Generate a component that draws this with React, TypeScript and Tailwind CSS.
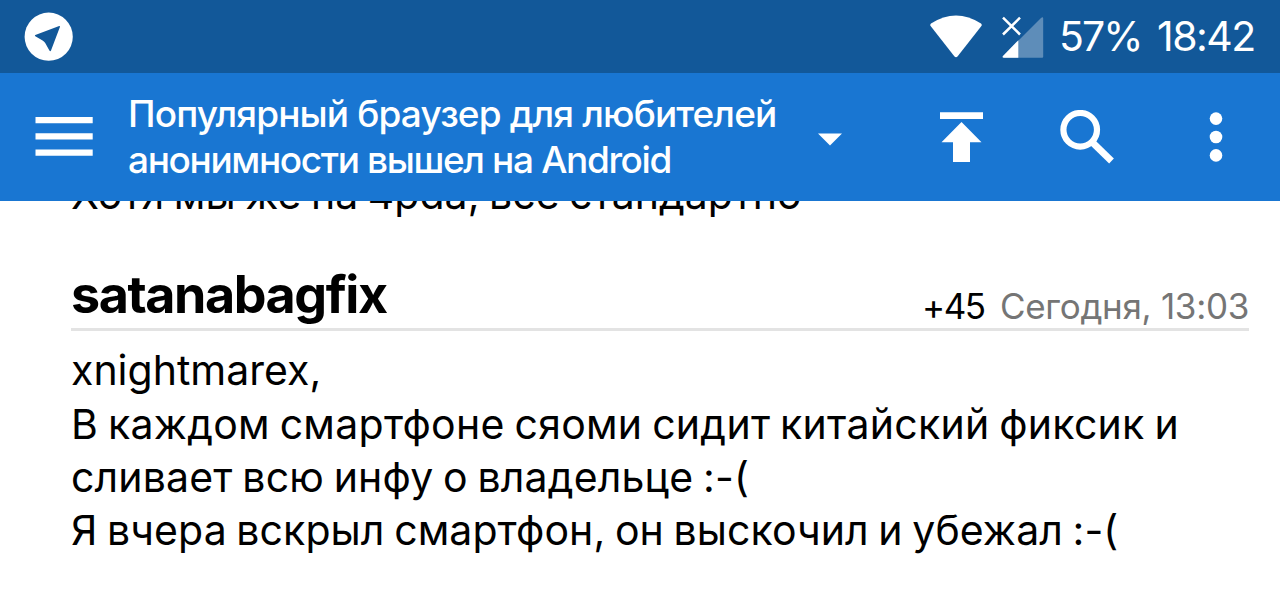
import type { ReactNode } from "react"
import { clsx } from "clsx"

interface TextLine {
  text: string
  className: string
}

const titleLines: TextLine[] = [
  { text: "Популярный браузер для любителей", className: "tracking-[-0.87px]" },
  { text: "анонимности вышел на Android", className: "tracking-[-1.37px]" },
]

const commentLines: TextLine[] = [
  { text: "xnightmarex,", className: "tracking-normal" },
  { text: "В каждом смартфоне сяоми сидит китайский фиксик и", className: "tracking-[0.27px]" },
  { text: "сливает всю инфу о владельце :-(", className: "tracking-[0.17px]" },
  { text: "Я вчера вскрыл смартфон, он выскочил и убежал :-(", className: "tracking-[0.08px]" },
]

function TelegramIcon() {
  return (
    <svg className="h-12 w-12 overflow-visible" viewBox="0 0 48 48">
      <circle cx="23.7" cy="23.7" r="24.1" fill="#fff" />
      <path d="M34.2 13 10.3 22Q9.4 22.6 10.3 23.2L17.6 27.4Q19.4 28.4 20.2 30L24.4 37.6Q25.3 38.8 26 37.6L35 13.8Q35 12.8 34.2 13Z" fill="#125899" />
    </svg>
  )
}

function WifiIcon() {
  return (
    <svg className="h-[43px] w-[52px]" viewBox="0 0 52 43">
      <path d="M1 8.5Q26-7.5 51 8.5Q52.3 9.6 51.4 11L27.5 41.4Q26 43 24.5 41.4L.6 11Q-.3 9.6 1 8.5Z" fill="#fff" />
    </svg>
  )
}

function SignalIcon() {
  return (
    <svg className="h-[42px] w-[42px]" viewBox="0 0 42 42">
      <path d="M1 40 39 2Q41.2.4 41.2 2.8V40.8Q41.2 41.8 40.2 41.8H2Q-.2 41.8 1 40Z" fill="#fff" fillOpacity=".32" />
      <path d="M1 40 16.3 24.3V41.8H2Q-.2 41.8 1 40Z" fill="#fff" />
      <path d="M1 1.7 18 18.5M18 1.7 1 18.5" stroke="#fff" strokeWidth="2.5" />
    </svg>
  )
}

function StatusBar() {
  return (
    <div className="flex h-[73px] items-center bg-[#125899] pl-[25px] pr-[27px] text-[41px] leading-none">
      <TelegramIcon />
      <div className="ml-auto flex items-center">
        <WifiIcon />
        <div className="ml-5">
          <SignalIcon />
        </div>
        <span className="ml-[15px] w-[98px] whitespace-nowrap tracking-[-2px]">57%</span>
        <span className="w-[96px] whitespace-nowrap tracking-[-1.5px]">18:42</span>
      </div>
    </div>
  )
}

function IconButton({ label, className, children }: { label: string; className: string; children: ReactNode }) {
  return (
    <button aria-label={label} className={clsx("shrink-0", className)}>
      {children}
    </button>
  )
}

function Toolbar() {
  return (
    <header className="flex h-32 items-center bg-[#1976d2] pl-[35px] pr-[57px]">
      <IconButton label="Меню" className="w-[58px]">
        <svg className="h-10 w-[58px]" viewBox="0 0 58 40" fill="#fff">
          <path d="M.5 0H57.7V6.2H.5ZM.5 16.2H57.7V22.4H.5ZM.5 32.4H57.7V38.8H.5Z" />
        </svg>
      </IconButton>
      <h1 className="ml-[35px] w-[690px] text-[37px] font-medium leading-[46px]">
        {titleLines.map((line) => (
          <span key={line.text} className={clsx("block whitespace-nowrap", line.className)}>
            {line.text}
          </span>
        ))}
      </h1>
      <IconButton label="Разделы" className="w-6">
        <svg className="mt-[5px] h-[13px] w-6" viewBox="0 0 24 13" fill="#fff">
          <path d="M0 .5H24L12 12.5Z" />
        </svg>
      </IconButton>
      <IconButton label="Наверх" className="ml-[98px] w-[43px]">
        <svg className="h-[50px] w-[43px]" viewBox="0 0 43 50" fill="#fff">
          <path d="M0 .3H43V7H0ZM21.5 10 41.5 30.3H30V50H13V30.3H1.5Z" />
        </svg>
      </IconButton>
      <IconButton label="Поиск" className="ml-[77px] w-[54px]">
        <svg className="h-[54px] w-[54px]" viewBox="0 0 54 54" fill="none" stroke="#fff">
          <circle cx="20.2" cy="19.8" r="16.8" strokeWidth="6.2" />
          <path d="M32 32 51.5 51" strokeWidth="6.8" />
        </svg>
      </IconButton>
      <IconButton label="Ещё" className="ml-auto w-[14px]">
        <svg className="h-[50px] w-[14px]" viewBox="0 0 14 50" fill="#fff">
          <circle cx="7" cy="6.6" r="6.3" />
          <circle cx="7" cy="25" r="6.3" />
          <circle cx="7" cy="43.4" r="6.3" />
        </svg>
      </IconButton>
    </header>
  )
}

export default function App() {
  return (
    <div className="flex h-[595px] w-[1280px] flex-col overflow-hidden bg-white font-['Inter','Noto_Sans',sans-serif] text-black">
      <div className="text-white">
        <StatusBar />
        <Toolbar />
      </div>
      <main className="flex-1 overflow-hidden pl-[71px] pr-[31px] text-[41px] leading-[53.3px]">
        {/* Tail of the previous comment, scrolled under the toolbar */}
        <p className="-mt-[33px] whitespace-nowrap tracking-[0.02px] [word-spacing:-2px]">
          Хотя мы же на 4pda, все стандартно
        </p>

        <article className="mt-[44px]">
          <div className="flex items-end border-b-[3px] border-[#e3e3e3] pb-[3px]">
            <h2 className="text-[52px] font-bold leading-[60px] tracking-[-1.45px]">satanabagfix</h2>
            <div className="ml-auto flex text-[35px] leading-[38px]">
              <span className="w-[78px] whitespace-nowrap tracking-[-1.5px]">+45</span>
              <span className="w-[249px] whitespace-nowrap tracking-[-0.3px] text-[#757575]">Сегодня, 13:03</span>
            </div>
          </div>
          <div className="mt-[13px] [word-spacing:-2px]">
            {commentLines.map((line) => (
              <p key={line.text} className={clsx("whitespace-nowrap", line.className)}>
                {line.text}
              </p>
            ))}
          </div>
        </article>
      </main>
    </div>
  )
}
